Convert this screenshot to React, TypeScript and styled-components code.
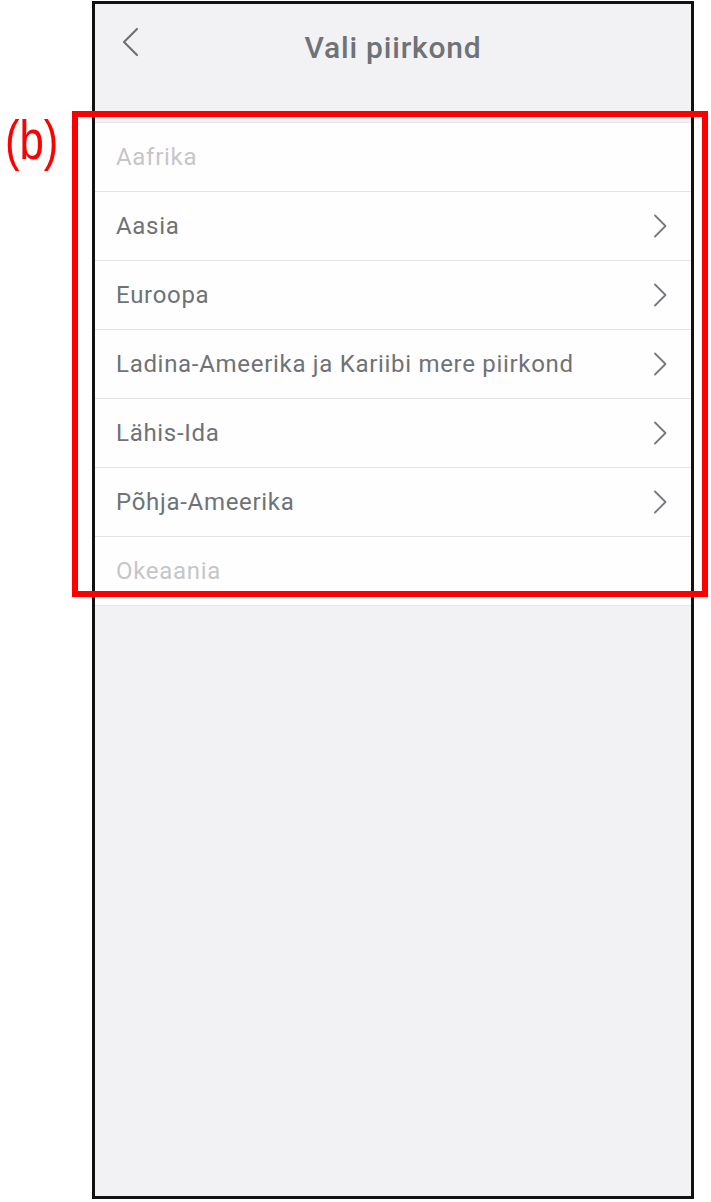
import React from 'react';
import styled, {createGlobalStyle} from 'styled-components';

const GlobalStyle = createGlobalStyle`
  html, body {
    margin: 0;
    padding: 0;
    background: #ffffff;
  }
  body {
    font-family: Roboto, "Liberation Sans", sans-serif;
  }
`;

type Region = {name: string; enabled: boolean};

const regions: Region[] = [
  {name: 'Aafrika', enabled: false},
  {name: 'Aasia', enabled: true},
  {name: 'Euroopa', enabled: true},
  {name: 'Ladina-Ameerika ja Kariibi mere piirkond', enabled: true},
  {name: 'Lähis-Ida', enabled: true},
  {name: 'Põhja-Ameerika', enabled: true},
  {name: 'Okeaania', enabled: false},
];

const BackIcon = () => (
  <svg width="18" height="30" viewBox="0 0 18 30" fill="none">
    <path d="M16 2 L3 15 L16 28" stroke="#6f7276" strokeWidth="2.2" strokeLinecap="round" strokeLinejoin="round" />
  </svg>
);

const ChevronIcon = () => (
  <svg width="14" height="24" viewBox="0 0 14 24" fill="none">
    <path d="M2 1.5 L12.5 12 L2 22.5" stroke="#75787c" strokeWidth="1.8" strokeLinecap="round" strokeLinejoin="round" />
  </svg>
);

export default function App() {
  return (
    <Page>
      <GlobalStyle />
      <Phone>
        <Header>
          <BackButton>
            <BackIcon />
          </BackButton>
          <Title>Vali piirkond</Title>
        </Header>
        <List>
          {regions.map(r => (
            <Row key={r.name}>
              <RowLabel disabled={!r.enabled}>{r.name}</RowLabel>
              {r.enabled && <ChevronIcon />}
            </Row>
          ))}
        </List>
      </Phone>
      <Marker>(b)</Marker>
      <Highlight />
    </Page>
  );
}

const Page = styled.div`
  position: relative;
  width: 711px;
  height: 1202px;
  overflow: hidden;
`;

const Phone = styled.div`
  box-sizing: border-box;
  margin: 1px 0 0 92px;
  width: 602px;
  height: 1198px;
  border: 3px solid #111111;
  background: #f2f2f4;
  display: flex;
  flex-direction: column;
`;

const Header = styled.header`
  position: relative;
  height: 118px;
  display: flex;
  justify-content: center;
  padding-top: 26px;
  box-sizing: border-box;
`;

const BackButton = styled.div`
  position: absolute;
  left: 26px;
  top: 23px;
  display: flex;
`;

const Title = styled.h1`
  margin: 0;
  font-family: Roboto, "Liberation Sans", sans-serif;
  font-weight: 500;
  font-size: 30px;
  letter-spacing: 0.8px;
  line-height: 36px;
  color: #6f7276;
`;

const List = styled.ul`
  list-style: none;
  margin: 0;
  padding: 0;
  background: #fefefe;
  border-top: 1px solid #e6e6e8;
`;

const Row = styled.li`
  height: 68px;
  display: flex;
  align-items: center;
  justify-content: space-between;
  padding: 0 24px 0 21px;
  border-bottom: 1px solid #e4e4e6;
`;

const RowLabel = styled.span<{disabled?: boolean}>`
  font-size: 24px;
  letter-spacing: 0.7px;
  color: ${p => (p.disabled ? '#c6c6c8' : '#6f7276')};
`;

const Marker = styled.div`
  position: absolute;
  left: 5px;
  top: 106px;
  font-family: "Liberation Sans", Arial, sans-serif;
  font-size: 56px;
  line-height: 68px;
  color: #ff0000;
  transform: scaleX(0.78);
  transform-origin: left top;
`;

const Highlight = styled.div`
  position: absolute;
  left: 72px;
  top: 111px;
  width: 636px;
  height: 486px;
  box-sizing: border-box;
  border: 6px solid #ff0000;
`;
